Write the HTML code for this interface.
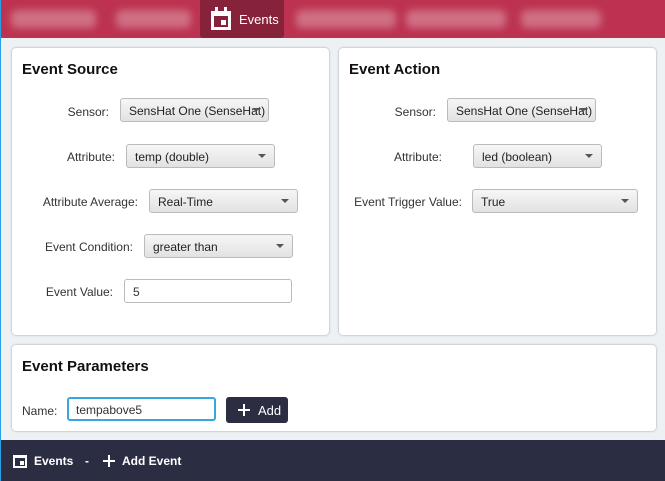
<!DOCTYPE html><html><head><style>
body{margin:0;width:665px;height:481px;background:#edf1f4;font-family:"Liberation Sans",sans-serif;font-size:12px;color:#333;position:relative;overflow:hidden;border-left:1px solid #2aa0e8;box-sizing:border-box}
.top{position:absolute;left:0;top:0;width:665px;height:38px;background:#bc3250}
.blur{position:absolute;top:10px;height:18px;background:rgba(255,255,255,.3);filter:blur(4px);border-radius:6px}
.tab{position:absolute;left:199px;top:0;width:84px;height:38px;background:#862239;border-radius:0 0 3px 3px;color:#fff;font-size:13px}
.panel{position:absolute;background:#fff;border-radius:4px;box-shadow:0 0 2px rgba(0,0,0,.35)}
h2{position:absolute;margin:0;font-size:15px;font-weight:bold;color:#111;left:10px;top:13px}
.lbl{position:absolute;text-align:right;width:200px;font-size:12px;color:#333}
.cb{position:absolute;height:24px;border:1px solid #bbb;border-radius:3px;background:linear-gradient(#f6f6f6,#e2e2e2);box-sizing:border-box;padding:5px 8px;font-size:12px;color:#222;white-space:nowrap;overflow:hidden}
.cb:after{content:"";position:absolute;right:8px;top:9px;border:4px solid transparent;border-top:4px solid #555}
.tf{position:absolute;height:24px;border:1px solid #bbb;border-radius:3px;background:#fff;box-sizing:border-box;padding:5px 8px;font-size:12px}
.bot{position:absolute;left:0;top:440px;width:665px;height:41px;background:#2b2d42;color:#fff;font-weight:bold;font-size:12px}
</style></head><body>
<div class="top">
<div class="blur" style="left:10px;width:85px"></div>
<div class="blur" style="left:115px;width:75px"></div>
<div class="blur" style="left:295px;width:100px"></div>
<div class="blur" style="left:405px;width:100px"></div>
<div class="blur" style="left:520px;width:80px"></div>
<div class="tab"><svg style="position:absolute;left:10px;top:7px" width="22" height="24" viewBox="0 0 22 24"><rect x="1" y="4" width="20" height="19" fill="#fff"/><rect x="4" y="9" width="14" height="11" fill="#862239"/><rect x="5" y="0" width="3" height="6" fill="#fff"/><rect x="14" y="0" width="3" height="6" fill="#fff"/><rect x="11" y="13" width="5" height="5" fill="#fff"/></svg><span style="position:absolute;left:39px;top:12px">Events</span></div>
</div>
<div class="panel" style="left:11px;top:48px;width:317px;height:287px"><h2>Event Source</h2>
<div class="lbl" style="left:-103px;top:57px">Sensor:</div><div class="cb" style="left:108px;top:50px;width:149px">SensHat One (SenseHat)</div>
<div class="lbl" style="left:-97px;top:102px">Attribute:</div><div class="cb" style="left:114px;top:96px;width:149px">temp (double)</div>
<div class="lbl" style="left:-74px;top:147px">Attribute Average:</div><div class="cb" style="left:137px;top:141px;width:149px">Real-Time</div>
<div class="lbl" style="left:-79px;top:192px">Event Condition:</div><div class="cb" style="left:132px;top:186px;width:149px">greater than</div>
<div class="lbl" style="left:-99px;top:237px">Event Value:</div><div class="tf" style="left:112px;top:231px;width:168px">5</div>
</div>
<div class="panel" style="left:338px;top:48px;width:317px;height:287px"><h2>Event Action</h2>
<div class="lbl" style="left:-103px;top:57px">Sensor:</div><div class="cb" style="left:108px;top:50px;width:149px">SensHat One (SenseHat)</div>
<div class="lbl" style="left:-97px;top:102px">Attribute:</div><div class="cb" style="left:134px;top:96px;width:129px">led (boolean)</div>
<div class="lbl" style="left:-77px;top:147px">Event Trigger Value:</div><div class="cb" style="left:133px;top:141px;width:166px">True</div>
</div>
<div class="panel" style="left:11px;top:345px;width:644px;height:86px"><h2>Event Parameters</h2>
<div style="position:absolute;left:10px;top:59px">Name:</div>
<div class="tf" style="left:55px;top:52px;width:149px;border:2px solid #39a7df;padding:4px 7px">tempabove5</div>
<div style="position:absolute;left:214px;top:52px;width:62px;height:26px;background:#2b2d42;border-radius:3px;color:#fff"><svg style="position:absolute;left:12px;top:7px" width="12" height="12"><path d="M6 0V12M0 6H12" stroke="#fff" stroke-width="2"/></svg><span style="position:absolute;left:32px;top:6px;font-size:13px">Add</span></div>
</div>
<div class="bot">
<svg style="position:absolute;left:12px;top:13px" width="14" height="15" viewBox="0 0 14 15"><rect x="0" y="2" width="14" height="13" fill="#fff"/><rect x="2" y="5" width="10" height="8" fill="#2b2d42"/><rect x="7" y="8" width="4" height="4" fill="#fff"/></svg>
<span style="position:absolute;left:33px;top:14px">Events</span>
<span style="position:absolute;left:84px;top:14px">-</span>
<svg style="position:absolute;left:102px;top:15px" width="12" height="12"><path d="M6 0V12M0 6H12" stroke="#fff" stroke-width="2"/></svg>
<span style="position:absolute;left:121px;top:14px">Add Event</span>
</div>
</body></html>
